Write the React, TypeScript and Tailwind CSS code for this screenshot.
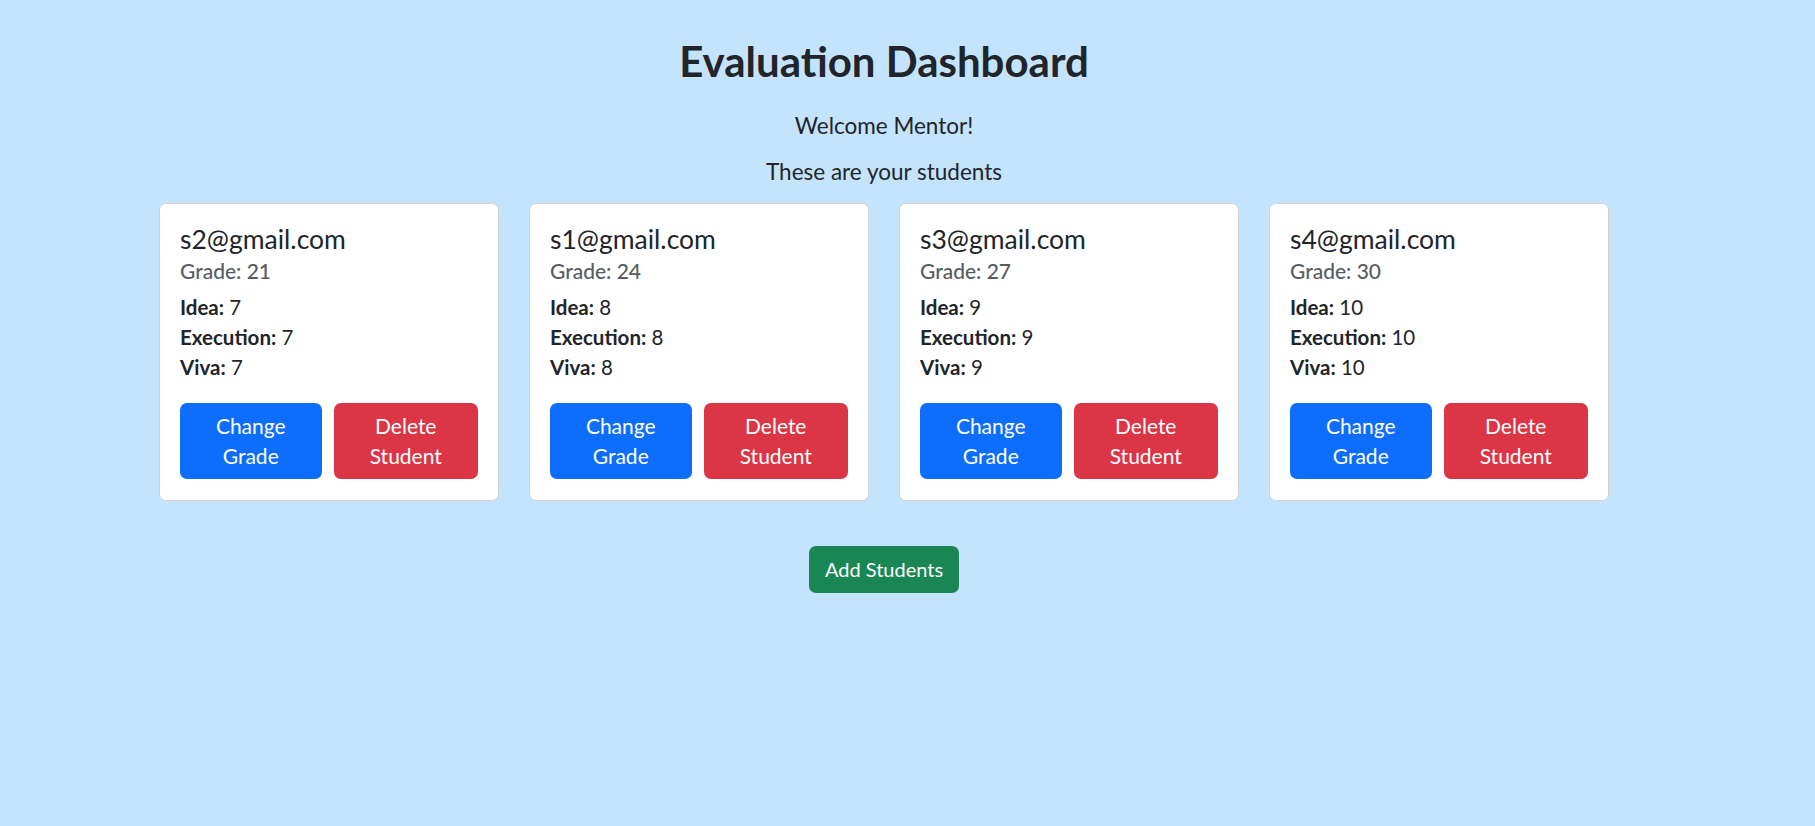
import React from 'react'

type Student = {
  email: string
  idea: number
  execution: number
  viva: number
}

const students: Student[] = [
  { email: 's2@gmail.com', idea: 7, execution: 7, viva: 7 },
  { email: 's1@gmail.com', idea: 8, execution: 8, viva: 8 },
  { email: 's3@gmail.com', idea: 9, execution: 9, viva: 9 },
  { email: 's4@gmail.com', idea: 10, execution: 10, viva: 10 },
]

function StudentCard({ student }: { student: Student }) {
  const grade = student.idea + student.execution + student.viva
  return (
    <div className="w-[340px] rounded-[7px] border border-[#cfd3d8] bg-white px-[20px] pt-[20px] pb-[21px] text-left">
      <h5 className="text-[26.5px] leading-[30px] font-normal">{student.email}</h5>
      <h6 className="mt-[5px] text-[21px] leading-[24px] font-medium text-[#595c5f]">Grade: {grade}</h6>
      <div className="mt-[9px] text-[20.5px] leading-[30px]">
        <p>
          <strong className="font-bold">Idea:</strong> {student.idea}
        </p>
        <p>
          <strong className="font-bold">Execution:</strong> {student.execution}
        </p>
        <p>
          <strong className="font-bold">Viva:</strong> {student.viva}
        </p>
      </div>
      <div className="mt-[21px] flex gap-[12px]">
        <button className="w-[142px] rounded-[7px] bg-[#0d6efd] px-[15px] py-[8px] text-[21px] leading-[30px] text-white">
          Change Grade
        </button>
        <button className="w-[145px] rounded-[7px] bg-[#dc3545] px-[15px] py-[8px] text-[21px] leading-[30px] text-white">
          Delete Student
        </button>
      </div>
    </div>
  )
}

export default function App() {
  return (
    <div className="min-h-screen bg-[#c4e3fd] font-['Lato',sans-serif] text-[#212529]">
      <div className="flex w-[1768px] flex-col items-center pt-[37px] text-center">
        <h1 className="text-[42px] leading-[48px] font-bold">Evaluation Dashboard</h1>
        <p className="mt-[26px] text-[22.5px] leading-[30px]">Welcome Mentor!</p>
        <p className="mt-[16px] text-[22.5px] leading-[30px]">These are your students</p>
        <div className="mt-[16px] flex gap-[30px]">
          {students.map((s) => (
            <StudentCard key={s.email} student={s} />
          ))}
        </div>
        <button className="mt-[45px] w-[150px] rounded-[7px] bg-[#198754] py-[8px] text-[20px] leading-[31px] text-white">
          Add Students
        </button>
      </div>
    </div>
  )
}
